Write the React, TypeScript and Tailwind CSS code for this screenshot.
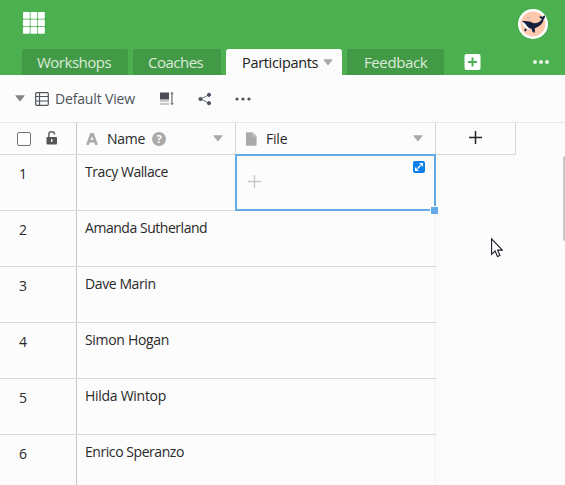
import React from "react";

const people = [
  { name: "Tracy Wallace", tracking: "tracking-[-0.44px]" },
  { name: "Amanda Sutherland", tracking: "tracking-[-0.46px]" },
  { name: "Dave Marin", tracking: "tracking-[-0.4px]" },
  { name: "Simon Hogan", tracking: "tracking-[-0.32px]" },
  { name: "Hilda Wintop", tracking: "tracking-[-0.28px]" },
  { name: "Enrico Speranzo", tracking: "tracking-[-0.44px]" },
];

function Caret({ className = "" }: { className?: string }) {
  return (
    <svg width="10" height="7" viewBox="0 0 10 7" className={`shrink-0 ${className}`}>
      <path d="M0.800 0.200h8.400a.4.4 0 0 1 .3.7L5.500 6a.7.7 0 0 1-1 0L.5.9a.4.4 0 0 1 .3-.7z" fill="currentColor" />
    </svg>
  );
}

function AppsIcon() {
  return (
    <svg width="22" height="22" viewBox="0 0 22 22" fill="#fff">
      {[0, 7.5, 15].map((y) =>
        [0, 7.5, 15].map((x) => <rect key={`${x}-${y}`} x={x} y={y} width="6.8" height="6.8" rx="0.8" />),
      )}
    </svg>
  );
}

function Avatar() {
  return (
    <svg width="30" height="30" viewBox="0 0 30 30">
      <circle cx="15" cy="15" r="15" fill="#fff" />
      <circle cx="15" cy="15" r="12.4" fill="#fdc8ac" />
      <path d="M3.500 12.500c3 .2 5.500 1.500 7.500 5l4 2.500c-4 1.500-10.500-.5-11.500-7.500z" fill="#f4f5f8" />
      <path d="M3.800 12.400c4-.9 8 .1 12 1.900 3.800-.2 6.500-1.200 8.200-4.300-1.800-.3-2.400-1.200-2.400-2.700 1.300-.3 2.200.2 3 1 .3-1 1-1.700 2.400-1.800.3 1.700-.2 2.700-1.300 3.500-.7 4.500-4.200 7.800-9 9.200.4 1.800.3 3.300-.4 4.800-1.700-1-2.500-2.500-2.700-4.300-4.800-.2-4.600-5.800-9.800-7.300z" fill="#15203c" />
      <path d="M7 19.500l2 .8-1.500 2.200-1.300-.8z" fill="#15203c" />
      <path d="M9 9.500c0-2 1-2 1.600-.8.5-1.200 1.800-1 1.600.8z" fill="#aeb8ca" />
    </svg>
  );
}

function Dots({ className, gap = 6, r = 2 }: { className?: string; gap?: number; r?: number }) {
  return (
    <svg width="18" height="6" viewBox="0 0 18 6" className={className} fill="currentColor">
      <circle cx={9 - gap} cy="3" r={r} />
      <circle cx="9" cy="3" r={r} />
      <circle cx={9 + gap} cy="3" r={r} />
    </svg>
  );
}

function Tabs() {
  const idle = "h-[26px] shrink-0 rounded-t-[2px] bg-[#439a46] pl-[15px] text-[#dcebdc]";
  return (
    <nav className="flex h-[26px] items-start gap-[5px] pl-[22px] text-[15px] leading-[27px] whitespace-nowrap">
      <div className={`${idle} w-[106px] tracking-[-0.5px]`}>Workshops</div>
      <div className={`${idle} w-[88px] tracking-[-0.5px]`}>Coaches</div>
      <div className="flex h-[26px] w-[116px] shrink-0 items-center rounded-t-[3px] bg-[#fcfcfc] pl-4 text-[#202020]">
        <span className="w-[81px] text-[14.500px] tracking-[-0.32px]">Participants</span>
        <Caret className="text-[#aaa]" />
      </div>
      <div className={`${idle} w-[97px] pl-[17px] tracking-[-0.4px]`}>Feedback</div>
      <svg width="17" height="16" viewBox="0 0 17 16" className="mt-[5px] ml-[15px] shrink-0">
        <rect x="0.500" width="16" height="16" rx="2" fill="#fff" />
        <path d="M8.500 3.500v9M4 8h9" stroke="#4caf50" strokeWidth="2" />
      </svg>
      <Dots className="mt-[10px] ml-[46px] shrink-0 text-[#e5f4e5]" />
    </nav>
  );
}

function Toolbar() {
  return (
    <div className="flex h-[47px] items-center pl-[15px] text-[#4b5259]">
      <Caret className="text-[#858585]" />
      <svg width="14" height="14" viewBox="0 0 14 14" className="ml-[10px]" fill="none" stroke="#50565d" strokeWidth="1.2">
        <rect x="0.700" y="0.700" width="12.600" height="12.600" rx="1" />
        <path d="M1 4.500h12M1 9h12M4.500 1v12" />
      </svg>
      <span className="ml-[6px] w-[105px] text-[14px] leading-5 font-medium tracking-[-0.16px] whitespace-nowrap">Default View</span>
      <svg width="14" height="13" viewBox="0 0 14 13">
        <rect width="9" height="7" y="0.500" fill="#4b4f53" />
        <path d="M0 9h9M0 12h9" stroke="#b5b5b5" strokeWidth="1.300" />
        <path d="M12 1v11M10.700 1.700L12 .5l1.300 1.200M10.700 11.300L12 12.500l1.300-1.200" stroke="#4b4f53" fill="none" />
      </svg>
      <svg width="14" height="14" viewBox="0 0 14 14" className="ml-[24px]" fill="#4b5563" stroke="#4b5563">
        <path d="M11 2.800L2.500 7l8.500 4.200" fill="none" strokeWidth="0.800" />
        <circle cx="2.500" cy="7" r="1.600" />
        <circle cx="11" cy="2.800" r="1.600" />
        <circle cx="11" cy="11.200" r="1.600" />
      </svg>
      <Dots className="ml-[22px]" r={1.600} />
    </div>
  );
}

function HeaderRow() {
  return (
    <div className="grid h-[32px] w-[516px] grid-cols-[77px_159px_200px_80px] border-b border-[#d8d8d8] text-[14px] text-[#292929]">
      <div className="flex items-center border-r border-[#c8c8c8] pl-[17px]">
        <div className="size-[14px] rounded-[2px] border border-[#777] bg-white" />
        <svg width="12" height="14" viewBox="0 0 12 14" className="mb-[2px] ml-[15px]">
          <path d="M2.800 7V4a2.900 2.900 0 0 1 5.800-.5" fill="none" stroke="#666" strokeWidth="1.500" />
          <rect x="0.500" y="6" width="10.500" height="7.500" rx="1" fill="#555" />
          <path d="M5.750 8v3" stroke="#fff" strokeWidth="1.300" />
        </svg>
      </div>
      <div className="flex items-center border-r border-[#d5d5d5] pl-[9px]">
        <svg width="12" height="12" viewBox="0 0 12 12" fill="none" stroke="#aaa" strokeWidth="2.600">
          <path d="M1.400 12L5.300 1.200h1.400L10.600 12M3 8.200h6" />
        </svg>
        <span className="ml-[9px] w-[45px] tracking-[-0.25px]">Name</span>
        <div className="flex size-[14px] items-center justify-center rounded-full bg-[#aaa] text-[11px] leading-none font-bold text-white">?</div>
        <Caret className="ml-[47px] text-[#aaa]" />
      </div>
      <div className="flex items-center border-r border-[#d5d5d5] pl-[10px]">
        <svg width="11" height="14" viewBox="0 0 11 14">
          <path d="M1 .3h5.500L10.600 4.300v8.400a1 1 0 0 1-1 1H1a1 1 0 0 1-1-1V1.300a1 1 0 0 1 1-1z" fill="#aaa" />
          <path d="M6.800 .3v3.700h3.800" stroke="#d5d5d5" strokeWidth="0.700" fill="none" />
        </svg>
        <span className="ml-[9px] w-[147px] tracking-[-0.2px]">File</span>
        <Caret className="text-[#aaa]" />
      </div>
      <div className="flex items-center border-r border-[#d5d5d5] pb-[2px] pl-[33px]">
        <svg width="13" height="13" viewBox="0 0 13 13" stroke="#222" strokeWidth="1.500">
          <path d="M6.500 0v13M0 6.500h13" />
        </svg>
      </div>
    </div>
  );
}

function SelectedCell() {
  return (
    <div className="relative">
      <div className="absolute -top-px -left-px h-[57px] w-[201px] border-2 border-[#64aae8] bg-[#fcfcfc]">
        <svg width="13" height="13" viewBox="0 0 13 13" className="absolute top-[19px] left-[11px]" stroke="#c8c8cb" strokeWidth="1.300">
          <path d="M6.500 0v13M0 6.500h13" />
        </svg>
        <svg width="12" height="12" viewBox="0 0 12 12" className="absolute top-[5px] right-[9px]">
          <rect width="12" height="12" rx="2" fill="#087feb" />
          <path d="M4.500 7.500l3-3" stroke="#fff" strokeWidth="1.300" />
          <path d="M6 2h4v4zM2 6v4h4z" fill="#fff" />
        </svg>
        <div className="absolute -right-[5px] -bottom-[6px] size-[9px] border border-[#fcfcfc] bg-[#64aae8]" />
      </div>
    </div>
  );
}

export default function App() {
  return (
    <main className="relative h-[485px] w-[565px] overflow-hidden bg-[#fcfcfc] font-['Open_Sans','Noto_Sans',sans-serif]">
      <header className="h-[75px] bg-[#4caf50]">
        <div className="flex h-[49px] items-start justify-between pr-[17px] pl-[23px]">
          <div className="pt-3"><AppsIcon /></div>
          <div className="pt-[9px]"><Avatar /></div>
        </div>
        <Tabs />
      </header>
      <Toolbar />
      <section className="border-t border-[#e4e6e7]">
        <HeaderRow />
        {people.map((person, i) => (
          <div key={person.name} className="grid h-[56px] w-[436px] grid-cols-[77px_159px_200px] border-b border-[#d8d8d8] text-[14px] text-[#292929] last:border-b-0">
            <div className="border-r border-[#c8c8c8] pt-[7px] pl-[19px] leading-[24px]">{i + 1}</div>
            <div className={`pt-[6px] pl-2 leading-[22px] whitespace-nowrap ${person.tracking}`}>{person.name}</div>
            {i === 0 ? <SelectedCell /> : <div className="border-r border-dotted border-[#e8e8e8]" />}
          </div>
        ))}
      </section>
      <div className="absolute top-[156px] right-0 h-[85px] w-[2px] rounded-l-sm bg-[#c8c8c8]" />
      <svg width="12" height="20" viewBox="0 0 12 20" className="absolute top-[238px] left-[491px]">
        <path d="M.6.8v15.500l3.500-3.300 2.400 5.500 2.500-1-2.400-5.400h4.700z" fill="#fff" stroke="#1c1c28" strokeWidth="1.100" />
      </svg>
    </main>
  );
}
